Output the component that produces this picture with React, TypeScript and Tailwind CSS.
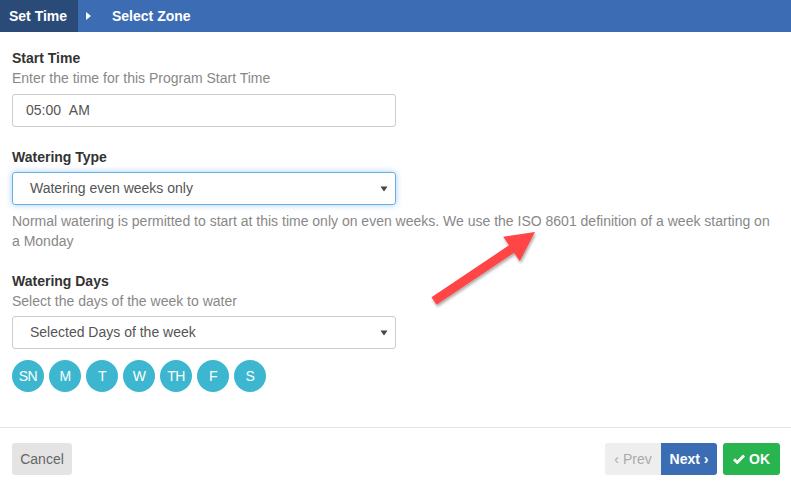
import React from "react";

const font = { fontFamily: '"Liberation Sans", Arial, sans-serif' };

function Caret() {
  return (
    <svg width="8" height="6" viewBox="0 0 8 6" className="shrink-0">
      <path d="M0.5 0.5 L7.5 0.5 L4 5.5 Z" fill="#444" />
    </svg>
  );
}

export default function App() {
  const days = ["SN", "M", "T", "W", "TH", "F", "S"];
  return (
    <div className="relative w-[791px] h-[484px] bg-white overflow-hidden text-[14px]" style={font}>
      {/* header */}
      <div className="flex h-8 bg-[#3c6db4] text-white font-bold items-stretch">
        <div className="flex items-center w-[78px] pl-[9px] bg-[#2a4a77]">Set Time</div>
        <div className="flex items-center pl-[8px]">
          <svg width="6" height="8" viewBox="0 0 6 8">
            <path d="M0 0 L5 4 L0 8 Z" fill="#fff" />
          </svg>
          <span className="ml-[20px]">Select Zone</span>
        </div>
      </div>

      <div className="pl-3 pr-[16px]">
        <div className="mt-[16px] font-bold text-[#333] leading-5">Start Time</div>
        <div className="text-[#888] leading-5">Enter the time for this Program Start Time</div>
        <div className="mt-[6px] w-[384px] h-[33px] border border-[#ccc] rounded-[3px] flex items-center pl-[13px] text-[#555]">
          05:00&nbsp;&nbsp;AM
        </div>

        <div className="mt-[20px] font-bold text-[#333] leading-5">Watering Type</div>
        <div className="mt-[5px] w-[384px] h-[33px] border border-[#66afe9] rounded-[3px] flex items-center justify-between pl-[17px] pr-[7px] text-[#555] shadow-[0_0_6px_rgba(102,175,233,0.6)]">
          <span>Watering even weeks only</span>
          <Caret />
        </div>
        <div className="mt-[6px] text-[#888] leading-5 pr-[4px]">
          Normal watering is permitted to start at this time only on even weeks. We use the ISO 8601 definition of a week starting on a Monday
        </div>

        <div className="mt-[21px] font-bold text-[#333] leading-[19px]">Watering Days</div>
        <div className="text-[#888] leading-5">Select the days of the week to water</div>
        <div className="mt-[5px] w-[384px] h-[33px] border border-[#ccc] rounded-[3px] flex items-center justify-between pl-[17px] pr-[7px] text-[#555]">
          <span>Selected Days of the week</span>
          <Caret />
        </div>
        <div className="mt-[11px] flex gap-[5px]">
          {days.map((d) => (
            <div
              key={d}
              className="w-8 h-8 rounded-full bg-[#3cb7cf] text-white text-[14px] flex items-center justify-center tracking-[-0.5px]"
            >
              {d}
            </div>
          ))}
        </div>
      </div>

      <div className="mt-[35px] border-t border-[#e5e5e5]"></div>

      <div className="flex items-center justify-between pl-3 pr-[11px] mt-[15px]">
        <div className="h-[32px] w-[60px] rounded-[3px] bg-[#e4e4e4] text-[#666] flex items-center justify-center">
          Cancel
        </div>
        <div className="flex items-center">
          <div className="h-[32px] w-[56px] rounded-l-[3px] bg-[#eeeeee] text-[#aaa] flex items-center justify-center">
            ‹ Prev
          </div>
          <div className="h-[32px] w-[56px] rounded-r-[3px] bg-[#3b6db5] text-white font-bold flex items-center justify-center">
            Next ›
          </div>
          <div className="ml-[6px] h-[32px] w-[57px] rounded-[3px] bg-[#28b44f] text-white font-bold flex items-center justify-center gap-[4px]">
            <svg width="12" height="10" viewBox="0 0 12 10">
              <path d="M1 5.2 L4.3 8.5 L11 1.6" stroke="#fff" strokeWidth="2.8" fill="none" />
            </svg>
            OK
          </div>
        </div>
      </div>

      {/* red arrow overlay */}
      <svg className="absolute left-0 top-0 pointer-events-none" width="791" height="484">
        <defs>
          <filter id="sh" x="-20%" y="-20%" width="140%" height="140%">
            <feDropShadow dx="1" dy="2" stdDeviation="1.5" floodColor="#000" floodOpacity="0.35" />
          </filter>
        </defs>
        <polygon
          points="431.5,297.3 509,245.3 503.2,236.8 535,232 519.8,261.2 514,252.7 436.5,304.7"
          fill="#ff4444"
          filter="url(#sh)"
        />
      </svg>
    </div>
  );
}
